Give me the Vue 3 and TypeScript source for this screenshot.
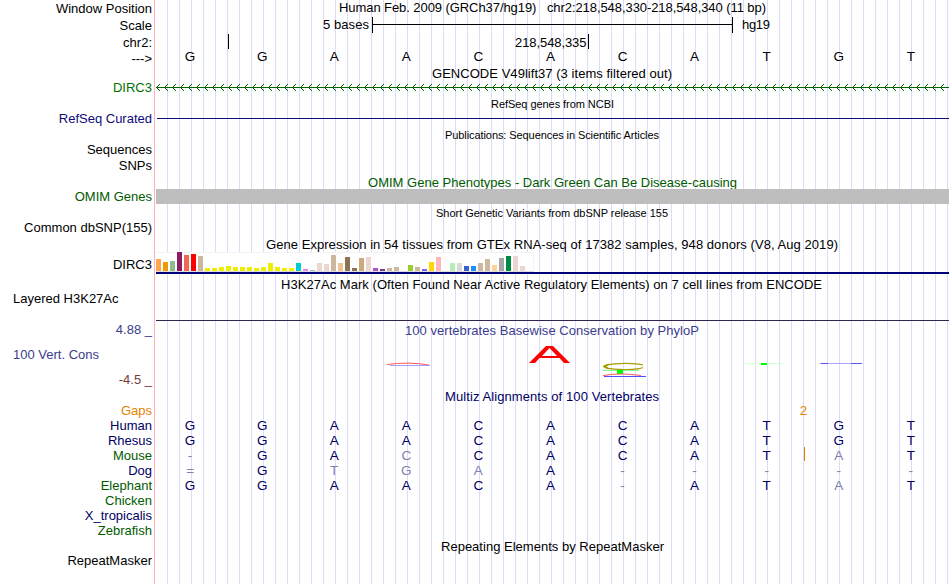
<template>
  <div class="browser">
    <div v-for="(row, i) in rows" :key="i" class="row" :style="{ height: row.h + 'px' }">
      <div :class="['label', row.align, row.tone]">
        <span v-if="row.label">{{ row.label }}</span>
      </div>
      <svg class="track" width="795" :height="row.h">
        <text
          v-if="row.title"
          :class="[row.titleTone, { small: row.small }]"
          :x="row.x! - LEFT"
          :y="row.base"
          :textLength="row.w"
        >{{ row.title }}</text>

        <g v-if="row.kind === 'scale'" shape-rendering="crispEdges">
          <text x="168" y="12" textLength="46">5 bases</text>
          <path d="M217.5 0V16M577.5 0V16M217 7.5H578" stroke="#000" />
          <text x="587" y="12" textLength="28">hg19</text>
        </g>

        <g v-else-if="row.kind === 'position'">
          <path d="M73.5 0V15M433.5 0V15" stroke="#000" shape-rendering="crispEdges" />
          <text x="360" y="13" textLength="71.5">218,548,335</text>
        </g>

        <g v-else-if="row.kind === 'bases'">
          <text
            v-for="(base, n) in row.bases"
            :key="n"
            :class="['base', row.weak?.includes(n) || base === '-' || base === '=' ? 'faded' : row.tone === 'black' ? '' : 'navy']"
            :x="center(n)"
            :y="row.base"
          >{{ base }}</text>
          <path v-if="row.insert" d="M649.5 -1V13" stroke="#e68200" shape-rendering="crispEdges" />
        </g>

        <g v-else-if="row.kind === 'gene'" fill="none" stroke="#006400">
          <path d="M1 6.5H794" shape-rendering="crispEdges" />
          <path :d="arrows" />
        </g>

        <rect v-else-if="row.kind === 'refseq'" x="2" y="6" width="792" height="1" fill="#0c0c78" />
        <rect v-else-if="row.kind === 'omim'" x="1" y="0" width="793" height="15" fill="#bebebe" />

        <g v-else-if="row.kind === 'gtex'" shape-rendering="crispEdges">
          <rect x="1" y="0" width="378" height="19" fill="#fff" />
          <path d="M1 .5H378.5V18" fill="none" stroke="#f3f3f3" />
          <rect x="1" y="19" width="378" height="1" fill="#ddd" />
          <rect
            v-for="(bar, n) in tissues"
            :key="n"
            :x="1 + n * 7"
            :y="19 - bar[0]"
            width="5"
            :height="bar[0]"
            :fill="bar[1]"
          />
          <rect x="1" y="20" width="793" height="2" fill="#000078" />
        </g>

        <rect v-else-if="row.kind === 'histone'" x="1" y="28" width="793" height="1" fill="#32234f" />

        <g v-else-if="row.kind === 'logo'" fill="none">
          <path d="M232 26.5Q253 23.5 274 27" stroke="#ff5a5a" />
          <path d="M235 27.5H275" stroke="#8c8cff" stroke-width="0.8" />
          <path d="M374 25L391 8H398L415 25H409L404.5 20H384.5L380 25ZM387 18H402L394.5 10Z" fill="#f00" fill-rule="evenodd" />
          <path d="M488 27C481 24.6 460 25 452 27Q446 28.5 452 30.2C461 32.2 484 32 488 29.5" stroke="#a6a000" stroke-width="1.3" />
          <path d="M454 26L448 28.4L454 31L451 28.4Z" stroke="#a6a000" fill="#a6a000" />
          <path d="M447 32.5H484" stroke="#8f8" />
          <path d="M462 32H468V36H462Z" fill="#0f0" />
          <path d="M448 37.6Q465 34.5 486 37.5" stroke="#ff5a5a" />
          <path d="M449 38.5H491" stroke="#5050ff" />
          <path d="M590 25.5H628" stroke="#d0ffd0" />
          <path d="M606 25H612V27H606Z" fill="#0f0" />
          <path d="M665 25.5H707" stroke="#a8a4ff" />
          <path d="M666 25.5H673M696 25.5H707" stroke="#5c54ee" />
        </g>

        <text v-else-if="row.kind === 'gaps'" class="base orange" x="648.5" y="12">2</text>
      </svg>
    </div>
  </div>
</template>

<script setup lang="ts">
interface Row {
  h: number
  label?: string
  tone?: string
  align?: string
  title?: string
  titleTone?: string
  small?: boolean
  x?: number
  w?: number
  base?: number
  kind?: string
  bases?: string
  weak?: number[]
  insert?: boolean
}

// tracks start right after the label column
const LEFT = 155

const rows: Row[] = [
  { h: 17, label: 'Window Position', title: 'Human Feb. 2009 (GRCh37/hg19)\u00a0\u00a0\u00a0chr2:218,548,330-218,548,340 (11 bp)', x: 339, w: 427, base: 12 },
  { h: 17, label: 'Scale', kind: 'scale' },
  { h: 16, label: 'chr2:', kind: 'position' },
  { h: 16, label: '--->', tone: 'black', kind: 'bases', bases: 'GGAACACATGT', base: 11 },
  { h: 15, title: 'GENCODE V49lift37 (3 items filtered out)', x: 432, w: 240, base: 12 },
  { h: 15, label: 'DIRC3', tone: 'green', align: 'raised', kind: 'gene' },
  { h: 16, title: 'RefSeq genes from NCBI', small: true, x: 491, w: 123, base: 12 },
  { h: 15, label: 'RefSeq Curated', tone: 'blue', align: 'raised', kind: 'refseq' },
  { h: 16, title: 'Publications: Sequences in Scientific Articles', small: true, x: 445, w: 214, base: 12 },
  { h: 15, label: 'Sequences', align: 'raised' },
  { h: 16, label: 'SNPs', align: 'raised' },
  { h: 15, title: 'OMIM Gene Phenotypes - Dark Green Can Be Disease-causing', titleTone: 'dark-green', x: 368, w: 369, base: 13 },
  { h: 15, label: 'OMIM Genes', tone: 'dark-green', kind: 'omim' },
  { h: 16, title: 'Short Genetic Variants from dbSNP release 155', small: true, x: 436, w: 232, base: 13 },
  { h: 15, label: 'Common dbSNP(155)' },
  { h: 17, title: 'Gene Expression in 54 tissues from GTEx RNA-seq of 17382 samples, 948 donors (V8, Aug 2019)', x: 266, w: 572, base: 14 },
  { h: 25, label: 'DIRC3', kind: 'gtex' },
  { h: 15, title: 'H3K27Ac Mark (Often Found Near Active Regulatory Elements) on 7 cell lines from ENCODE', x: 281, w: 541, base: 12 },
  { h: 30, label: 'Layered H3K27Ac', align: 'start upper', kind: 'histone' },
  { h: 16, label: '4.88 _', tone: 'violet', align: 'raised', title: '100 vertebrates Basewise Conservation by PhyloP', titleTone: 'violet', x: 405, w: 294, base: 13 },
  { h: 34, label: '100 Vert. Cons', tone: 'violet', align: 'start raised', kind: 'logo' },
  { h: 16, label: '-4.5 _', tone: 'maroon', align: 'raised' },
  { h: 15, title: 'Multiz Alignments of 100 Vertebrates', titleTone: 'navy', x: 445, w: 214, base: 13 },
  { h: 15, label: 'Gaps', tone: 'orange', kind: 'gaps' },
  { h: 15, label: 'Human', tone: 'navy', kind: 'bases', bases: 'GGAACACATGT', base: 12 },
  { h: 15, label: 'Rhesus', tone: 'navy', kind: 'bases', bases: 'GGAACACATGT', base: 12 },
  { h: 15, label: 'Mouse', tone: 'dark-green', kind: 'bases', bases: '-GACCACATAT', weak: [3, 9], base: 12, insert: true },
  { h: 15, label: 'Dog', tone: 'navy', kind: 'bases', bases: '=GTGAA-----', weak: [2, 3, 4], base: 12 },
  { h: 15, label: 'Elephant', tone: 'dark-green', kind: 'bases', bases: 'GGAACA-ATAT', weak: [9], base: 12 },
  { h: 15, label: 'Chicken', tone: 'dark-green' },
  { h: 15, label: 'X_tropicalis', tone: 'navy' },
  { h: 15, label: 'Zebrafish', tone: 'dark-green' },
  { h: 16, title: 'Repeating Elements by RepeatMasker', x: 441, w: 223, base: 13 },
  { h: 15, label: 'RepeatMasker', align: 'raised' }
]

// [height, colour] for each GTEx tissue
const tissues: [number, string][] = [
  [12, '#ffa54f'], [9, '#ee9a00'], [10, '#8fbc8f'], [19, '#8b1c62'], [16, '#ee6a50'], [17, '#ff0000'], [15, '#cdb79e'],
  [3, '#eeee00'], [3, '#eeee00'], [4, '#eeee00'], [5, '#eeee00'], [4, '#eeee00'], [4, '#eeee00'], [4, '#eeee00'],
  [3, '#eeee00'], [4, '#eeee00'], [8, '#eeee00'], [4, '#eeee00'], [3, '#eeee00'], [3, '#eeee00'],
  [8, '#00cdcd'], [2, '#ee82ee'], [1, '#9ac0cd'], [8, '#eed5d2'], [7, '#eed5d2'], [16, '#cdb79e'], [8, '#eec591'],
  [14, '#8b7355'], [3, '#8b7355'], [13, '#cdaa7d'], [14, '#eed5d2'], [3, '#b452cd'], [2, '#7a378b'], [3, '#cdb79e'],
  [4, '#cdb79e'], [0, '#cdb79e'], [6, '#9acd32'], [4, '#cdb79e'], [2, '#7a67ee'], [9, '#ffd700'], [14, '#ffb6c1'],
  [0, '#cd9b1d'], [8, '#b4eeb4'], [8, '#d9d9d9'], [5, '#3a5fcd'], [5, '#1e90ff'], [8, '#cdb79e'], [12, '#cdb79e'],
  [6, '#ffd39b'], [13, '#a6a6a6'], [15, '#008b45'], [15, '#eed5d2'], [5, '#eed5d2'], [0, '#ff00ff']
]

// strand chevrons, one every 8px
const arrows = Array.from({ length: 99 }, (_, i) => {
  const x = 1.5 + i * 8
  return `M${x + 3.5} 3L${x} 6.5L${x + 3.5} 10`
}).join('')

function center(n: number): number {
  return 35.1 + n * 72.07
}
</script>

<style>
body {
  background: #fff;
}
</style>

<style scoped>
.browser {
  width: 950px;
  height: 584px;
  overflow: hidden;
  font: 13px "Liberation Sans", Arial, sans-serif;
  color: #000;
  background:
    linear-gradient(#ffb0b0, #ffb0b0) 154px 0 / 1px 100% no-repeat,
    linear-gradient(#fff, #fff) 0 0 / 166px 100% no-repeat,
    repeating-linear-gradient(90deg, transparent 0 11px, #dcdcf8 11px 12px);
}

.row {
  display: grid;
  grid-template-columns: 155px 795px;
}

.label {
  display: flex;
  align-items: center;
  justify-content: flex-end;
  padding-right: 3px;
  white-space: pre;
  line-height: 15px;
}

.label.start {
  justify-content: flex-start;
  padding-left: 13px;
}

.label.raised {
  padding-bottom: 2px;
  line-height: 13px;
}

.label.upper {
  align-items: flex-start;
  margin-top: -1px;
}

.track {
  display: block;
  overflow: visible;
}

text {
  fill: #000;
}

.small {
  font-size: 11px;
}

.base {
  font-size: 13.5px;
  text-anchor: middle;
}

.green {
  color: #007000;
  fill: #007000;
}

.dark-green {
  color: #005a00;
  fill: #005a00;
}

.blue {
  color: #0c0c78;
}

.navy {
  color: #000064;
  fill: #000064;
}

.violet {
  color: #3c3c8c;
  fill: #3c3c8c;
}

.maroon {
  color: #783c3c;
}

.orange {
  color: #e68200;
  fill: #e68200;
}

.faded {
  fill: #8080b0;
}
</style>
